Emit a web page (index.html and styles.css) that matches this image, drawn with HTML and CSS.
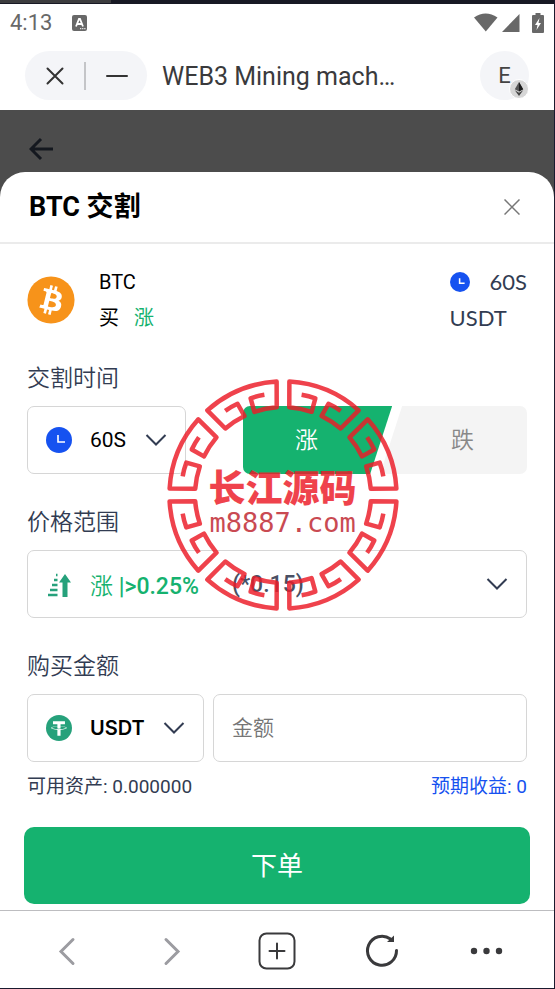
FILE: index.html
```
<!DOCTYPE html>
<html lang="zh-CN">

<head>
    <meta charset="UTF-8">
    <meta name="viewport" content="width=device-width, initial-scale=1.0">
    <title>BTC 交割</title>
    <link rel="stylesheet" href="styles.css">
</head>
<body>
<div class="window">
    <div class="tabs"><span></span></div>

    <!-- 状态栏 -->
    <div class="status">
        <span>4:13</span>
        <svg class="lang" width="15" height="16" viewBox="0 0 15 16">
            <rect width="15" height="16" rx="2" fill="#686868"/>
            <path d="M4 11.500L7 4h1l3 7.500M5.200 9h4.600" fill="none" stroke="#fff" stroke-width="1.800"/>
            <path d="M8 13.700h6" stroke="#fff" stroke-dasharray="1.300 .8"/>
        </svg>
        <div class="signals">
            <svg width="24" height="19" viewBox="0 0 24 19">
                <path d="M0 4.500Q11.500-3.500 23.500 4.500L11.800 18.500z" fill="#686868"/>
            </svg>
            <svg width="18" height="19" viewBox="0 0 18 19">
                <path d="M17.500 1v18H0z" fill="#686868"/>
            </svg>
            <svg class="battery" width="12" height="20" viewBox="0 0 12 20">
                <path d="M3.500 0h5v2H11q1 0 1 1v16q0 1-1 1H1q-1 0-1-1V3q0-1 1-1h2.500z" fill="#686868"/>
                <path d="M7.500 5L3 12h2.500L4.500 17 9 10H6.500z" fill="#fff"/>
            </svg>
        </div>
    </div>

    <!-- 标题栏 -->
    <header class="appbar">
        <div class="capsule">
            <button type="button" aria-label="关闭页面">
                <svg width="18" height="18" viewBox="0 0 18 18"><path d="M1.500 1.500l15 15M16.500 1.500l-15 15"/></svg>
            </button>
            <i></i>
            <button type="button" aria-label="最小化">
                <svg width="22" height="18" viewBox="0 0 22 18"><path d="M1 9h20"/></svg>
            </button>
        </div>
        <h1>WEB3 Mining mach…</h1>
        <button type="button" class="avatar">E
            <svg class="eth" width="20" height="20" viewBox="0 0 20 20">
                <circle cx="10" cy="10" r="9.500" fill="#d6d6d6" stroke="#fff"/>
                <path d="M10 3l4.200 7.200L10 12.500 5.800 10.200z" fill="#555"/>
                <path d="M10 3l4.200 7.200L10 12.500z" fill="#1d1d1d"/>
                <path d="M5.800 11.300L10 13.700l4.200-2.400L10 17z" fill="#444"/>
            </svg>
        </button>
    </header>

    <main class="page">
        <div class="mask">
            <a href="#" aria-label="返回">
                <svg width="24" height="24" viewBox="0 0 24 24"><path d="M12 2L2 12l10 10M2 12h22"/></svg>
            </a>
        </div>

        <section class="sheet">
            <div class="sheet-head">
                <h2>BTC 交割</h2>
                <button type="button" aria-label="关闭">
                    <svg width="16" height="16" viewBox="0 0 16 16"><path d="M.5.500l15 15M15.500.500l-15 15"/></svg>
                </button>
            </div>

            <form class="order">
                <div class="info">
                    <svg width="48" height="48" viewBox="0 0 32 32">
                        <circle cx="16" cy="16" r="15.700" fill="#f7931a"/>
                        <path fill="#fff" d="M23.189 14.020c.314-2.096-1.283-3.223-3.465-3.975l.708-2.840-1.728-.43-.69 2.765c-.454-.114-.920-.220-1.385-.326l.695-2.783L15.596 6l-.708 2.839c-.376-.086-.746-.170-1.104-.260l.002-.009-2.384-.595-.460 1.846s1.283.294 1.256.312c.700.175.826.638.805 1.006l-.806 3.235c.048.012.110.030.180.057l-.183-.045-1.130 4.532c-.086.212-.303.531-.793.410.018.025-1.256-.313-1.256-.313l-.858 1.978 2.250.561c.418.105.828.215 1.231.318l-.715 2.872 1.727.430.708-2.840c.472.127.930.245 1.378.357l-.706 2.828 1.728.430.715-2.866c2.948.558 5.164.333 6.097-2.333.752-2.146-.037-3.385-1.588-4.192 1.130-.260 1.980-1.003 2.207-2.538zm-3.950 5.538c-.533 2.147-4.148.986-5.320.695l.950-3.805c1.172.293 4.929.872 4.370 3.110zm.535-5.569c-.487 1.953-3.495.960-4.470.717l.860-3.450c.975.243 4.118.696 3.610 2.733z"/>
                    </svg>
                    <div class="info-name">
                        <p>BTC</p>
                        <p>买<b>涨</b></p>
                    </div>
                    <div class="info-term">
                        <p>
                            <svg width="20" height="20" viewBox="0 0 26 26">
                                <circle cx="13" cy="13" r="13" fill="#1652f0"/>
                                <path d="M12.500 8v6.500h6.500" fill="none" stroke="#fff" stroke-width="2"/>
                            </svg>
                            60S
                        </p>
                        <p>USDT</p>
                    </div>
                </div>

                <label class="title" for="time">交割时间</label>
                <div class="row row-time">
                    <div class="box">
                        <svg width="26" height="26" viewBox="0 0 26 26">
                            <circle cx="13" cy="13" r="13" fill="#1652f0"/>
                            <path d="M12 8v7h7" fill="none" stroke="#fff" stroke-width="1.600"/>
                        </svg>
                        <select id="time"><option>60S</option></select>
                        <svg class="arrow" width="22" height="12" viewBox="0 0 22 12"><path d="M1.500 1L11 10.500 20.500 1"/></svg>
                    </div>
                    <div class="toggle">
                        <button type="button" class="up">涨</button>
                        <button type="button" class="down">跌</button>
                    </div>
                </div>

                <label class="title" for="range">价格范围</label>
                <button type="button" id="range" class="box" aria-haspopup="listbox">
                    <svg width="26" height="26" viewBox="0 0 26 26">
                        <path d="M2 24h9.500M4 19h7.500M6 14h5.500M8 9h3.500M10 4h1.500" stroke="#26a17b" stroke-width="2.400"/>
                        <path d="M16.500 26V11.500H13L19 3l6 8.500h-3.500V26z" fill="#26a17b"/>
                    </svg>
                    <span class="rate"><i>涨</i> |&gt;0.25%</span>
                    <span class="odds">(*0.15)</span>
                    <svg class="arrow" width="22" height="12" viewBox="0 0 22 12"><path d="M1.500 1L11 10.500 20.500 1"/></svg>
                </button>

                <label class="title" for="amount">购买金额</label>
                <div class="row row-amount">
                    <div class="box">
                        <svg width="26" height="26" viewBox="0 0 32 32">
                            <circle cx="16" cy="16" r="16" fill="#26a17b"/>
                            <path fill="#fff" d="M17.922 17.383v-.002c-.110.008-.677.042-1.942.042-1.010 0-1.721-.030-1.971-.042v.003c-3.888-.171-6.790-.848-6.790-1.658 0-.809 2.902-1.486 6.790-1.660v2.644c.254.018.982.061 1.988.061 1.207 0 1.812-.050 1.925-.060v-2.643c3.880.173 6.775.850 6.775 1.658 0 .810-2.895 1.485-6.775 1.657m0-3.590v-2.366h5.414V7.819H8.595v3.608h5.414v2.365c-4.400.202-7.709 1.074-7.709 2.118 0 1.044 3.309 1.915 7.709 2.118v7.582h3.913v-7.584c4.393-.202 7.694-1.073 7.694-2.116 0-1.043-3.301-1.914-7.694-2.117"/>
                        </svg>
                        <select class="coin" aria-label="币种"><option>USDT</option></select>
                        <svg class="arrow" width="22" height="12" viewBox="0 0 22 12"><path d="M1.500 1L11 10.500 20.500 1"/></svg>
                    </div>
                    <input id="amount" class="box" type="text" placeholder="金额">
                </div>

                <div class="tips">
                    <span>可用资产: 0.000000</span>
                    <span class="profit">预期收益: 0</span>
                </div>
                <button type="submit" class="submit">下单</button>
            </form>

            <!-- 水印 -->
            <div class="mark">
                <svg viewBox="-116 -116 232 232">
                    <defs>
                        <path id="piece" d="M-21.200-99.800Q-14-101.500-7.100-101.700L-5.400-87.800Q-17-87-27.800-83.500L-37.500-107.200A113.500 113.500 0 0 1 37.500-107.200L27.800-83.500Q17-87 5.400-87.800L7.100-101.700Q14-101.500 21.200-99.800"/>
                    </defs>
                    <use href="#piece" transform="rotate(22.500)"/>
                    <use href="#piece" transform="rotate(67.500)"/>
                    <use href="#piece" transform="rotate(112.500)"/>
                    <use href="#piece" transform="rotate(157.500)"/>
                    <use href="#piece" transform="rotate(202.500)"/>
                    <use href="#piece" transform="rotate(247.500)"/>
                    <use href="#piece" transform="rotate(292.500)"/>
                    <use href="#piece" transform="rotate(337.500)"/>
                </svg>
                <div class="mark-text">
                    <strong>长江源码</strong>
                    <span>m8887.com</span>
                </div>
            </div>
        </section>
    </main>

    <!-- 底部导航 -->
    <nav class="toolbar">
        <button type="button" aria-label="后退">
            <svg width="38" height="38" viewBox="0 0 38 38"><path class="dim" d="M25 7.500L13 19.500l12 12"/></svg>
        </button>
        <button type="button" aria-label="前进">
            <svg width="38" height="38" viewBox="0 0 38 38"><path class="dim" d="M13 7.500l12 12-12 12"/></svg>
        </button>
        <button type="button" aria-label="新标签页">
            <svg width="38" height="38" viewBox="0 0 38 38">
                <rect x="1.500" y="1.500" width="35" height="35" rx="7"/>
                <path d="M11.500 19h15M19 11.500v15"/>
            </svg>
        </button>
        <button type="button" aria-label="刷新">
            <svg width="38" height="38" viewBox="0 0 38 38">
                <path class="bold" d="M33.500 18.500A14.500 14.500 0 1 1 27.500 7"/>
                <path class="tip" d="M31 3.500V10h-7z"/>
            </svg>
        </button>
        <button type="button" aria-label="更多">
            <svg width="38" height="38" viewBox="0 0 38 38">
                <g class="dots"><circle cx="6" cy="19" r="3.200"/><circle cx="18.500" cy="19" r="3.200"/><circle cx="31" cy="19" r="3.200"/></g>
            </svg>
        </button>
    </nav>
</div>
</body>
</html>
```

FILE: styles.css
```
* {
    margin: 0;
    padding: 0;
    box-sizing: border-box;
}

body {
    background-color: #fff;
    font-family: Roboto, "Noto Sans CJK SC", sans-serif;
    color: #000;
}

button, input, select {
    border: 0;
    background: none;
    font: inherit;
    color: inherit;
    outline: none;
}

button {
    cursor: pointer;
}

svg {
    display: block;
    flex-shrink: 0;
}

.window {
    display: flex;
    flex-direction: column;
    min-height: 100vh;
    border-right: 1px solid #1a1a2e;
    border-bottom: 1px solid #1a1a2e;
}

.tabs {
    height: 4px;
    background-color: #181924;
}

.tabs span {
    display: block;
    width: 20%;
    height: 3px;
    background-color: #3c3c3e;
}

/* 状态栏 */
.status {
    display: flex;
    align-items: center;
    height: 37px;
    padding: 0 10px;
    font-size: 22px;
    color: #686868;
}

.lang {
    margin-left: 20px;
}

.signals {
    display: flex;
    align-items: center;
    gap: 4px;
    margin-left: auto;
}

.battery {
    margin-left: 8px;
}

/* 标题栏 */
.appbar {
    display: flex;
    align-items: center;
    height: 69px;
    padding: 0 25px;
}

.capsule {
    display: flex;
    align-items: center;
    justify-content: space-between;
    width: 122px;
    height: 49px;
    padding: 0 19px 0 21px;
    border-radius: 25px;
    background-color: #f4f5f8;
}

.capsule svg {
    fill: none;
    stroke: #333;
    stroke-width: 2;
    stroke-linecap: round;
}

.capsule i {
    width: 2px;
    height: 28px;
    background-color: #c4c5c8;
}

.appbar h1 {
    flex: 1;
    margin-left: 15px;
    padding-top: 2px;
    font-size: 25px;
    font-weight: 400;
    color: #3a3a3c;
}

.avatar {
    position: relative;
    width: 49px;
    height: 49px;
    border-radius: 50%;
    background-color: #f4f5f8;
    font-size: 22px;
    color: #444;
}

.eth {
    position: absolute;
    right: 0;
    bottom: 1px;
}

/* 遮罩和弹层 */
.page {
    display: flex;
    flex: 1;
    flex-direction: column;
    background-color: #4c4c4c;
}

.mask {
    height: 62px;
    padding: 27px 29px 0;
}

.mask a {
    display: block;
    width: 24px;
}

.mask path {
    fill: none;
    stroke: #14181f;
    stroke-width: 3;
}

.sheet {
    position: relative;
    flex: 1;
    border-radius: 25px 25px 0 0;
    background-color: #fff;
}

.sheet-head {
    display: flex;
    align-items: center;
    justify-content: space-between;
    height: 72px;
    padding: 0 34px 0 29px;
    border-bottom: 2px solid #ebebeb;
}

.sheet-head h2 {
    padding-bottom: 6px;
    font-size: 27px;
    font-weight: 700;
}

.sheet-head path {
    stroke: #777;
    stroke-width: 1.5;
}

.order {
    padding: 20px 27px 6px;
}

/* 币种信息 */
.info {
    display: flex;
    align-items: center;
    font-size: 20px;
    line-height: 36px;
}

.info-name {
    margin-left: 24px;
}

.info-name b {
    margin-left: 15px;
    font-weight: 400;
    color: #15b26f;
}

.info-term {
    margin-left: auto;
    font-family: Lato, sans-serif;
    font-size: 22px;
    color: #323c52;
}

.info-term p {
    display: flex;
    align-items: center;
    gap: 20px;
}

.title {
    display: block;
    margin: 35px 0 13px;
    font-size: 23px;
    font-weight: 350;
    line-height: 28px;
    color: #323c52;
}

.info + .title {
    margin-top: 29px;
}

.row {
    display: grid;
}

.row-time {
    grid-template-columns: 159px 1fr;
    column-gap: 57px;
}

.row-amount {
    grid-template-columns: 177px 1fr;
    column-gap: 9px;
}

.box {
    display: flex;
    align-items: center;
    width: 100%;
    min-width: 0;
    height: 68px;
    padding: 0 18px;
    border: 1px solid #d6d6d6;
    border-radius: 7px;
    font-size: 21px;
}

.box select {
    flex: 1;
    width: 0;
    height: 100%;
    margin-left: 18px;
    appearance: none;
}

.box .coin {
    font-family: Inter, sans-serif;
    font-size: 20px;
    font-weight: 600;
}

.box::placeholder {
    font-weight: 350;
    color: #757575;
}

.arrow {
    margin-left: auto;
    fill: none;
    stroke: #323c52;
    stroke-width: 2;
    pointer-events: none;
}

.rate {
    margin-left: 18px;
    font-size: 23px;
    font-weight: 500;
    color: #15b26f;
}

.rate i {
    font-style: normal;
    font-weight: 350;
}

.odds {
    margin-left: 33px;
    font-size: 23px;
    font-weight: 500;
    color: #4a5064;
}

/* 涨跌切换 */
.toggle {
    display: flex;
}

.toggle button {
    height: 68px;
    padding-bottom: 5px;
    font-size: 23px;
    font-weight: 350;
}

.toggle .up {
    flex: 147;
    padding-right: 22px;
    border-radius: 7px 0 0 7px;
    background-color: #15b26f;
    color: #fff;
    clip-path: polygon(0 0, 100% 0, calc(100% - 22px) 100%, 0 100%);
}

.toggle .down {
    flex: 149;
    margin-left: -12px;
    padding-left: 18px;
    border-radius: 7px;
    background-color: #f4f4f4;
    color: #888;
    clip-path: polygon(22px 0, 100% 0, 100% 100%, 0 100%);
}

.tips {
    display: flex;
    justify-content: space-between;
    margin-top: 13px;
    font-size: 19px;
    line-height: 24px;
    color: #323c52;
}

.tips .profit {
    color: #1652f0;
}

.submit {
    display: block;
    width: calc(100% + 6px);
    height: 77px;
    margin: 28px -3px 0;
    padding-bottom: 5px;
    border-radius: 10px;
    background-color: #15b26f;
    font-size: 26px;
    color: #fff;
}

/* 水印 */
.mark {
    position: absolute;
    top: 207px;
    left: 51%;
    width: 232px;
    height: 232px;
    margin-left: -116px;
    pointer-events: none;
}

.mark svg {
    fill: none;
    stroke: #ec1c28;
    stroke-width: 4.5;
    stroke-linejoin: round;
    opacity: .83;
}

.mark-text {
    position: absolute;
    top: 84px;
    left: 0;
    width: 100%;
    text-align: center;
    color: #ec1c28;
    opacity: .83;
}

.mark-text strong {
    display: block;
    font-size: 37px;
    font-weight: 900;
    line-height: 54px;
}

.mark-text span {
    display: block;
    margin-top: -8px;
    font-family: "DejaVu Sans Mono", monospace;
    font-size: 27px;
    line-height: 28px;
    color: #bf2630;
}

/* 底部导航 */
.toolbar {
    display: flex;
    align-items: center;
    justify-content: space-around;
    height: 78px;
    padding: 2px 15px 0;
    border-top: 1px solid #bdbdc0;
}

.toolbar button {
    width: 38px;
}

.toolbar svg {
    fill: none;
    stroke: #3a3a3c;
    stroke-width: 2;
    stroke-linecap: round;
}

.toolbar .dim {
    stroke: #9c9ca1;
    stroke-width: 3;
}

.toolbar .bold {
    stroke-width: 3;
}

.toolbar .tip,
.toolbar .dots {
    fill: #3a3a3c;
    stroke: none;
}
```
